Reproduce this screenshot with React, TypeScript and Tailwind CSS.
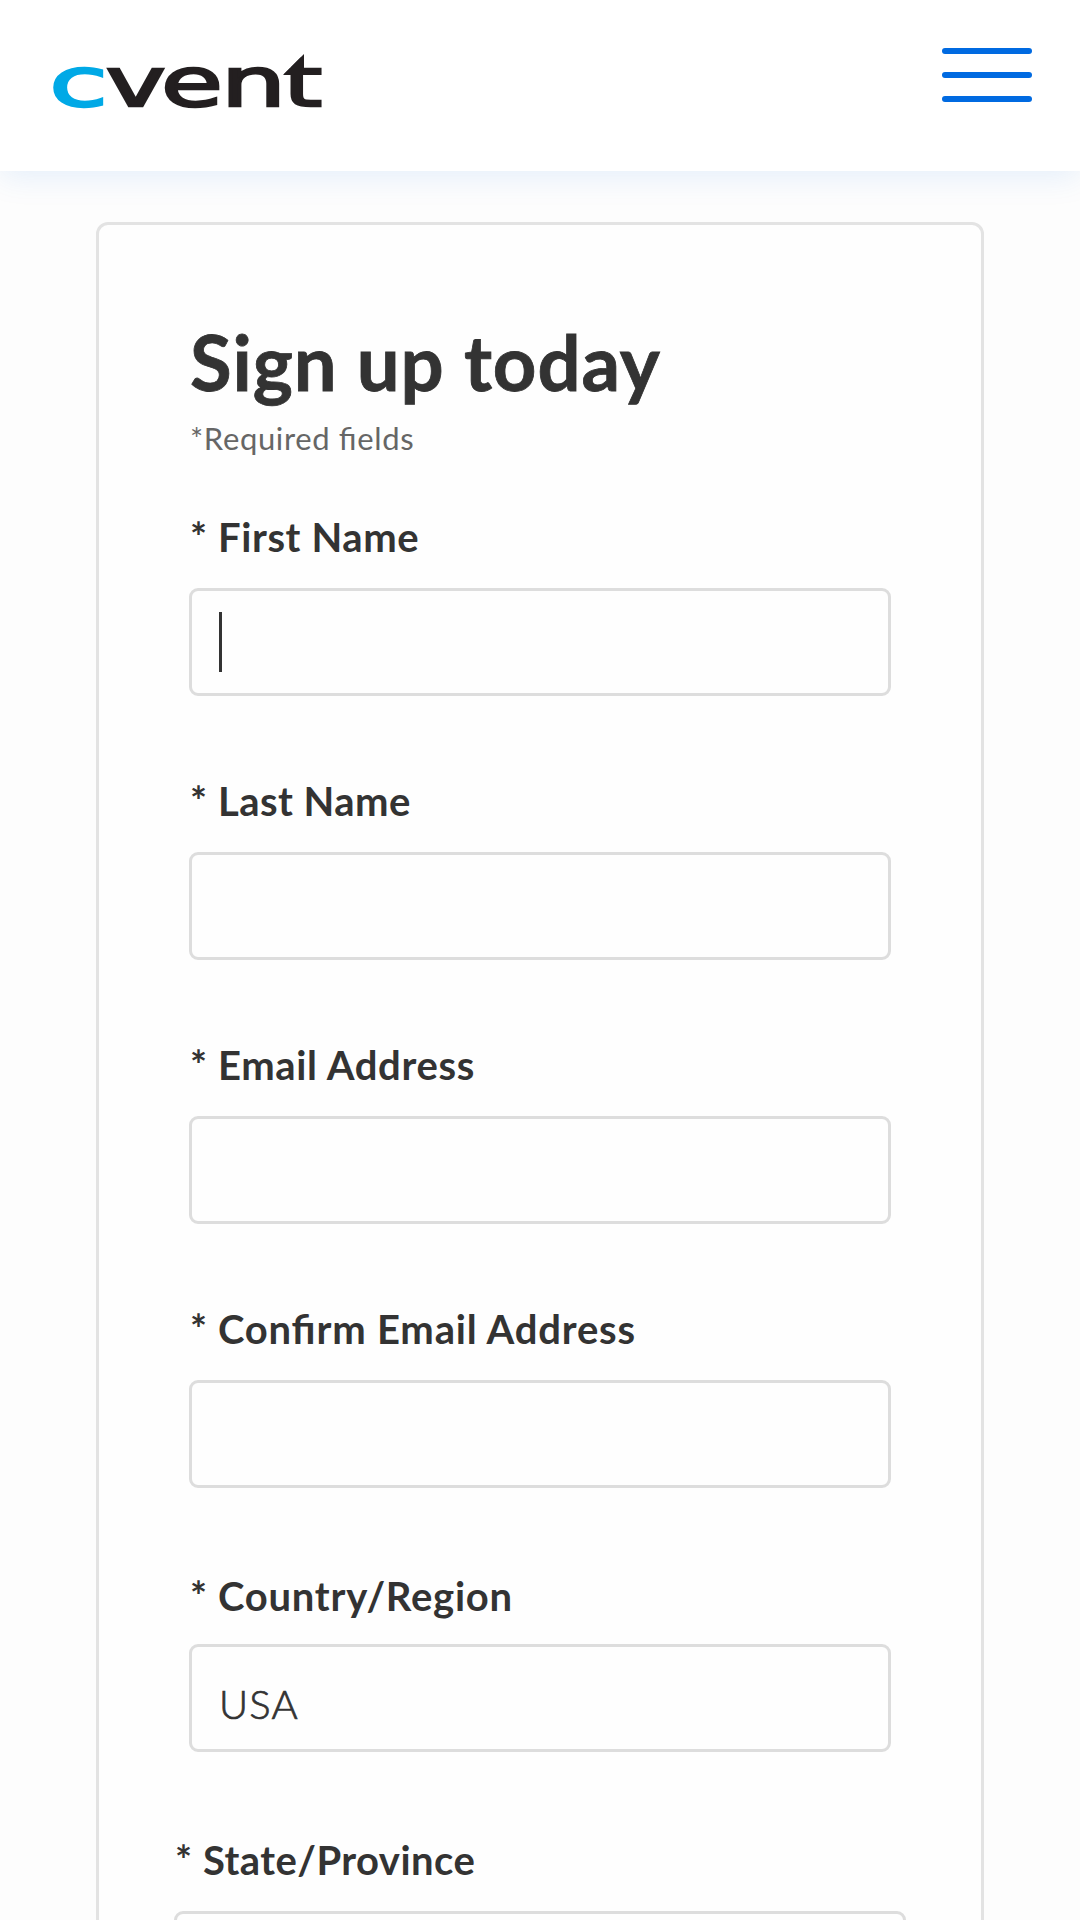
type FieldProps = {
  label: string;
  tracking: string;
  className?: string;
  labelClass?: string;
  value?: string;
  focused?: boolean;
};

function Logo() {
  return (
    <svg width="280" height="84" viewBox="48 40 280 84" className="block" role="img" aria-label="cvent">
      <g fontFamily="DejaVu Sans" fontSize="68" fill="#231f20" stroke="#231f20" strokeWidth="2.4">
        <text transform="translate(49.3 105.5) scale(1.57 1)" fill="#00a9e6" stroke="#00a9e6">c</text>
        <text transform="translate(105.8 105.5) scale(1.49 1)">v</text>
        <text transform="translate(161 105.5) scale(1.48 1)">e</text>
        <text transform="translate(221 105.5) scale(1.51 1)">n</text>
        <text transform="translate(283 105.5) scale(1.47 1)">t</text>
      </g>
      <polygon points="280,52 305,52 305,53 283,75 280,75" fill="#fff" />
      <polygon points="283,75 304,54 304,75" fill="#231f20" />
    </svg>
  );
}

function Field({ label, tracking, className = "", labelClass = "", value, focused }: FieldProps) {
  return (
    <div className={className}>
      <label className={`flex h-12 pl-px text-[40px] leading-[48px] font-bold whitespace-nowrap text-[#333] ${labelClass}`}>
        <span className="w-7 shrink-0">*</span>
        <span className={`[font-feature-settings:'liga'_1] ${tracking}`}>{label}</span>
      </label>
      <div className="mt-[27px] flex h-[108px] items-center rounded-[9px] border-[3px] border-[#ddd] bg-[#fefefe] pl-[27px]">
        {focused && <span className="h-[60px] w-[3px] bg-[#333]" />}
        {value && (
          <span className="mt-3 text-[40px] leading-[48px] font-light tracking-[1.2px] text-[#333] [-webkit-text-stroke:0.7px_#333]">
            {value}
          </span>
        )}
      </div>
    </div>
  );
}

export default function App() {
  return (
    <div className="h-[1920px] w-[1080px] overflow-hidden bg-[#fdfdfd] font-['Lato',sans-serif]">
      <header className="flex h-[171px] items-start justify-between bg-white pt-10 pr-12 pl-12 shadow-[0_6px_30px_rgba(0,106,225,0.1)]">
        <Logo />
        <button className="mt-2 flex w-[90px] flex-col gap-[18px]" aria-label="Menu">
          <span className="h-[6px] w-full rounded-full bg-[#006ae1]" />
          <span className="h-[6px] w-full rounded-full bg-[#006ae1]" />
          <span className="h-[6px] w-full rounded-full bg-[#006ae1]" />
        </button>
      </header>
      <main className="mx-24 mt-[51px] h-[1800px] rounded-xl border-[3px] border-[#e3e3e3] bg-[#fefefe] px-[90px] pt-[91px]">
        <h1 className="h-[92px] pl-px text-[76px] leading-[92px] font-bold tracking-[0.9px] whitespace-nowrap text-[#333] [-webkit-text-stroke:0.8px_#333]">
          Sign up today
        </h1>
        <p className="mt-[11px] h-[38px] pl-px text-[31px] leading-[38px] tracking-[0.65px] whitespace-nowrap text-[#666] [font-feature-settings:'liga'_1]">
          *Required fields
        </p>
        <form>
          <Field className="mt-14" label="First Name" tracking="tracking-[0.6px]" focused />
          <Field className="mt-[81px]" label="Last Name" tracking="tracking-[0.45px]" />
          <Field className="mt-[81px]" label="Email Address" tracking="tracking-[0.65px]" />
          <Field className="mt-[81px]" label="Confirm Email Address" tracking="tracking-[0.8px]" />
          <Field
            className="mt-[81px]"
            label="Country/Region"
            tracking="tracking-[0.75px]"
            labelClass="relative top-[3px]"
            value="USA"
          />
          <Field className="-mx-[15px] mt-[84px]" label="State/Province" tracking="tracking-[0.45px]" />
        </form>
      </main>
    </div>
  );
}
